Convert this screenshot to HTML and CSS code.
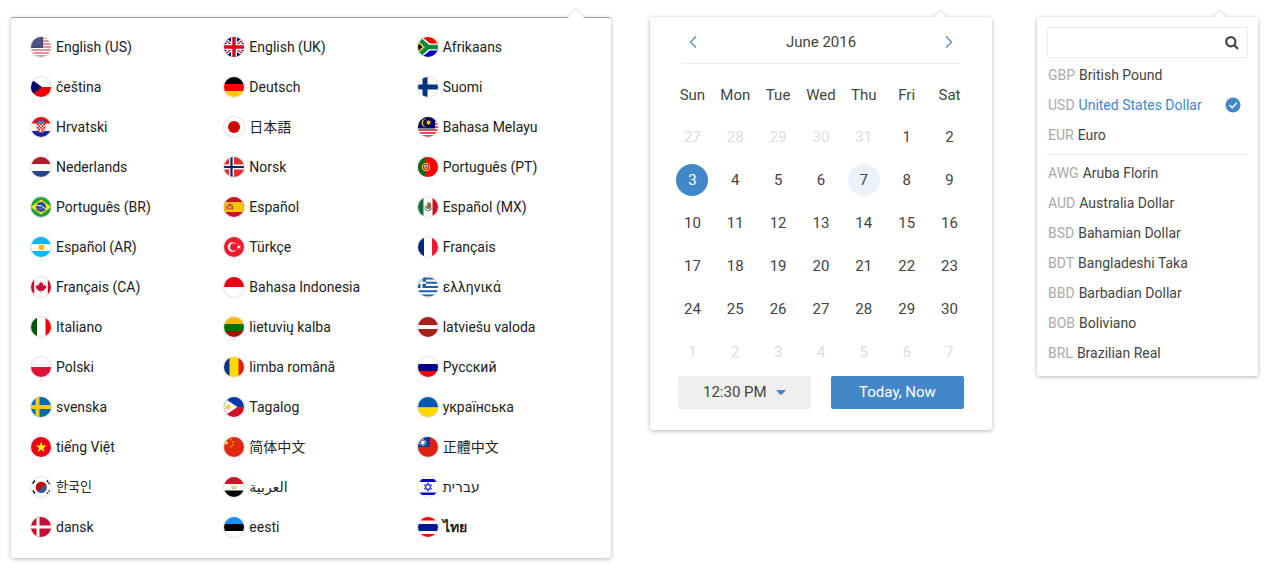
FILE: index.html
```html
<!DOCTYPE html>
<html lang="en">
<head>
<meta charset="utf-8">
<meta name="viewport" content="width=device-width, initial-scale=1">
<title>Pickers</title>
<link rel="stylesheet" href="styles.css">
</head>
<body>
<main class="pickers">

<nav class="panel languages" aria-label="Language">
<ul class="language-list">
<li><a class="language" href="#en-us"><svg class="flag" viewBox="0 0 20 20"><path fill="#fff" d="M0 0h20v20H0z"/><path stroke="#c8283c" stroke-width="1.2" d="M0 1h20M0 4h20M0 7h20M0 10h20M0 13h20M0 16h20M0 19h20"/><path fill="#3c4a78" d="M0 0h12v11H0z"/><path stroke="#8d97b5" stroke-width=".8" stroke-dasharray="1 1.4" d="M1 2h10M2 4h9M1 6h10M2 8h9"/></svg><span>English (US)</span></a></li>
<li><a class="language" href="#en-gb"><svg class="flag" viewBox="0 0 20 20"><path fill="#00007c" d="M0 0h20v20H0z"/><path stroke="#fff" stroke-width="4" d="M0 2l20 16M20 2L0 18"/><path stroke="#d8001c" stroke-width="1.2" d="M0 2l20 16M20 2L0 18"/><path stroke="#fff" stroke-width="6" d="M10 0v20M0 10h20"/><path stroke="#d8001c" stroke-width="3.4" d="M10 0v20M0 10h20"/></svg><span>English (UK)</span></a></li>
<li><a class="language" href="#af"><svg class="flag" viewBox="0 0 20 20"><path fill="#f00" d="M0 0h20v10H0z"/><path fill="#0000c4" d="M0 10h20v10H0z"/><path fill="none" stroke="#fff" stroke-width="7" d="M-2 2l10 8-10 8M8 10h13"/><path fill="#fff" d="M0 0h4l8 6.500v7L4 20H0z"/><path fill="none" stroke="#0a8a3c" stroke-width="4.400" d="M0 1l10 9L0 19M9 10h12"/><path fill="#ffc020" d="M0 4l6.500 6L0 16z"/><path d="M0 6l4.500 4L0 14z"/></svg><span>Afrikaans</span></a></li>

<li><a class="language" href="#cs"><svg class="flag" viewBox="0 0 20 20"><path fill="#fff" d="M0 0h20v10H0z"/><path fill="#f00000" d="M0 10h20v10H0z"/><path fill="#000070" d="M0 2l11 8-11 8z"/></svg><span>čeština</span></a></li>
<li><a class="language" href="#de"><svg class="flag" viewBox="0 0 20 20"><path d="M0 0h20v7H0z"/><path fill="#f00" d="M0 7h20v7H0z"/><path fill="#fc0" d="M0 14h20v6H0z"/></svg><span>Deutsch</span></a></li>
<li><a class="language" href="#fi"><svg class="flag" viewBox="0 0 20 20"><path fill="#fff" d="M0 0h20v20H0z"/><path stroke="#00357f" stroke-width="5" d="M7 0v20M0 10h20"/></svg><span>Suomi</span></a></li>

<li><a class="language" href="#hr"><svg class="flag" viewBox="0 0 20 20"><path fill="#fff" d="M0 0h20v20H0z"/><path fill="#f00" d="M0 0h20v6.5H0z"/><path fill="#1225a0" d="M0 14h20v6H0z"/><path fill="#4d7fc0" stroke="#243f8c" stroke-width=".6" d="M5.5 3.5l1.5 1 1.5-1.5L10 4l1.5-1L13 4.500l1.500-1L14 7H6z"/><path fill="#fff" stroke="#e00" stroke-width=".5" d="M6 6.500h8V12q0 3.500-4 3.500T6 12z"/><path stroke="#e00" stroke-width="1.600" stroke-dasharray="1.600 1.600" d="M6 7.500h8M7.600 9.100h6.400M6 10.700h8M7.600 12.300h6M7 14h6"/></svg><span>Hrvatski</span></a></li>
<li><a class="language" href="#ja"><svg class="flag" viewBox="0 0 20 20"><path fill="#fff" d="M0 0h20v20H0z"/><circle cx="10" cy="10" r="6" fill="#d30000"/></svg><span lang="ja">日本語</span></a></li>
<li><a class="language" href="#ms"><svg class="flag" viewBox="0 0 20 20"><path fill="#fff" d="M0 0h20v20H0z"/><path stroke="#d81424" stroke-width="1.400" d="M0 1h20M0 4h20M0 7h20M0 10h20M0 13h20M0 16h20M0 19h20"/><path fill="#000066" d="M0 0h17v11.500H0z"/><path fill="#fc0" d="M9 2a4.200 4.200 0 1 0 0 8 3.500 3.500 0 1 1 0-8zM10.500 2.500l.7 1.700 1.800-.4-1 1.600 1.200 1.400-1.900-.1-.8 1.800-.7-1.800-1.900.1 1.300-1.400-1.100-1.600 1.800.4z"/></svg><span>Bahasa Melayu</span></a></li>

<li><a class="language" href="#nl"><svg class="flag" viewBox="0 0 20 20"><path fill="#ae1c28" d="M0 0h20v7H0z"/><path fill="#fff" d="M0 7h20v7H0z"/><path fill="#21468b" d="M0 14h20v6H0z"/></svg><span>Nederlands</span></a></li>
<li><a class="language" href="#no"><svg class="flag" viewBox="0 0 20 20"><path fill="#ef2b2d" d="M0 0h20v20H0z"/><path stroke="#fff" stroke-width="5" d="M7.500 0v20M0 10h20"/><path stroke="#002868" stroke-width="2.200" d="M7.500 0v20M0 10h20"/></svg><span>Norsk</span></a></li>
<li><a class="language" href="#pt-pt"><svg class="flag" viewBox="0 0 20 20"><path fill="#f00" d="M0 0h20v20H0z"/><path fill="#066b12" d="M0 0h8v20H0z"/><circle cx="8" cy="10" r="3.700" fill="#d22" stroke="#f4d020" stroke-width="1.100"/><path fill="#fff" stroke="#d00" stroke-width=".8" d="M6 7.500h4v3q0 2-2 2t-2-2z"/><path stroke="#1c4a9c" d="M8 8.500v3M7 10h2"/></svg><span>Português (PT)</span></a></li>

<li><a class="language" href="#pt-br"><svg class="flag" viewBox="0 0 20 20"><path fill="#229e45" d="M0 0h20v20H0z"/><path fill="#f8e509" d="M10 2.500L20.500 10 10 17.500-.5 10z"/><circle cx="10" cy="10" r="5" fill="#2b49a3"/><path fill="none" stroke="#fff" stroke-width="1" d="M5.500 8.500q5-1 9 3.300"/><path stroke="#9fb0dc" stroke-width=".7" stroke-dasharray=".8 1.200" d="M7 11.500h5M8 13h4"/></svg><span>Português (BR)</span></a></li>
<li><a class="language" href="#es"><svg class="flag" viewBox="0 0 20 20"><path fill="#c8141e" d="M0 0h20v20H0z"/><path fill="#ffc400" d="M0 5h20v10H0z"/><path fill="#c8502c" d="M3.800 8h4v4.500h-4z"/><path fill="#ad1519" d="M4.700 6.800h2.200V8H4.700zM2.500 8.500h.8v4h-.8zM8.300 8.500h.8v4h-.8z"/><path stroke="#e8c9a0" stroke-width=".9" d="M5.800 8.700v3M4.500 10.200h2.700"/></svg><span>Español</span></a></li>
<li><a class="language" href="#es-mx"><svg class="flag" viewBox="0 0 20 20"><path fill="#fff" d="M0 0h20v20H0z"/><path fill="#12703a" d="M0 0h5.500v20H0z"/><path fill="#ce1126" d="M14.500 0H20v20h-5.500z"/><path fill="#8a6a48" d="M9 6q2-1.600 3.500.2 1.400 1.800.7 4.300l-2 1.500-3-.6q-1.600-1.600-.7-3.200l2 .8z"/><path fill="none" stroke="#3d9b5c" stroke-width="1" d="M6.500 10.500q1 3.400 3.500 3.400t3.800-3"/><path stroke="#c87830" stroke-width=".9" d="M8 9l2 2M10.500 12.500h2"/></svg><span>Español (MX)</span></a></li>

<li><a class="language" href="#es-ar"><svg class="flag" viewBox="0 0 20 20"><path fill="#00baff" d="M0 0h20v20H0z"/><path fill="#fff" d="M0 7h20v7H0z"/><circle cx="10.300" cy="10.300" r="3" fill="#fdc52c"/><circle cx="10.300" cy="10.300" r="3.500" fill="none" stroke="#f6cf68" stroke-dasharray=".8 .8"/><path stroke="#c98f18" stroke-width=".7" d="M9 9.800h1M10.800 9.800h1M9.600 11.500h1.500"/></svg><span>Español (AR)</span></a></li>
<li><a class="language" href="#tr"><svg class="flag" viewBox="0 0 20 20"><path fill="#f31830" d="M0 0h20v20H0z"/><circle cx="8.500" cy="10" r="4.800" fill="#fff"/><circle cx="9.900" cy="10" r="3.800" fill="#f31830"/><path fill="#fff" d="M12.300 10l1.700-.5.100-1.800 1.100 1.400 1.700-.5-1 1.400 1 1.400-1.700-.5-1.100 1.400-.1-1.800z"/></svg><span>Türkçe</span></a></li>
<li><a class="language" href="#fr"><svg class="flag" viewBox="0 0 20 20"><path fill="#fff" d="M0 0h20v20H0z"/><path fill="#00267f" d="M0 0h6v20H0z"/><path fill="#f31830" d="M14 0h6v20h-6z"/></svg><span>Français</span></a></li>

<li><a class="language" href="#fr-ca"><svg class="flag" viewBox="0 0 20 20"><path fill="#fff" d="M0 0h20v20H0z"/><path fill="#c60c30" d="M0 0h3.200v20H0zM16.800 0H20v20h-3.200zM10 4.500l1.200 2 1.200-.5-.4 3 1.500-1.200.5 1 1.500-.2-.6 1.600.7.500-3 2.400.3.900-2.600-.3v2h-.6v-2l-2.600.3.300-.9-3-2.400.7-.5-.6-1.600 1.500.2.500-1L8 9l-.4-3 1.200.5z"/></svg><span>Français (CA)</span></a></li>
<li><a class="language" href="#id"><svg class="flag" viewBox="0 0 20 20"><path fill="#fff" d="M0 0h20v20H0z"/><path fill="#e70011" d="M0 0h20v10H0z"/></svg><span>Bahasa Indonesia</span></a></li>
<li><a class="language" href="#el"><svg class="flag" viewBox="0 0 20 20"><path fill="#fff" d="M0 0h20v20H0z"/><path stroke="#1c5fb0" stroke-width="2.100" d="M0 1.500h20M0 5.700h20M0 10h20M0 14.200h20M0 18.500h20"/><path fill="#1c5fb0" d="M0 0h8v11H0z"/><path stroke="#fff" stroke-width="2" d="M3.500 0v11M0 5.700h8"/></svg><span>ελληνικά</span></a></li>

<li><a class="language" href="#it"><svg class="flag" viewBox="0 0 20 20"><path fill="#fff" d="M0 0h20v20H0z"/><path fill="#005700" d="M0 0h6v20H0z"/><path fill="#fc0000" d="M14.500 0H20v20h-5.500z"/></svg><span>Italiano</span></a></li>
<li><a class="language" href="#lt"><svg class="flag" viewBox="0 0 20 20"><path fill="#ffb800" d="M0 0h20v7H0z"/><path fill="#007308" d="M0 7h20v7H0z"/><path fill="#bf0000" d="M0 14h20v6H0z"/></svg><span>lietuvių kalba</span></a></li>
<li><a class="language" href="#lv"><svg class="flag" viewBox="0 0 20 20"><path fill="#a8201c" d="M0 0h20v20H0z"/><path fill="#fff" d="M0 8h20v4H0z"/></svg><span>latviešu valoda</span></a></li>

<li><a class="language" href="#pl"><svg class="flag" viewBox="0 0 20 20"><path fill="#fff" d="M0 0h20v10H0z"/><path fill="#dc143c" d="M0 10h20v10H0z"/></svg><span>Polski</span></a></li>
<li><a class="language" href="#ro"><svg class="flag" viewBox="0 0 20 20"><path fill="#ffd900" d="M0 0h20v20H0z"/><path fill="#00319c" d="M0 0h5.500v20H0z"/><path fill="#de2110" d="M14.500 0H20v20h-5.500z"/></svg><span>limba română</span></a></li>
<li><a class="language" href="#ru"><svg class="flag" viewBox="0 0 20 20"><path fill="#fff" d="M0 0h20v7H0z"/><path fill="#00008c" d="M0 7h20v7H0z"/><path fill="#f00" d="M0 14h20v6H0z"/></svg><span>Русский</span></a></li>

<li><a class="language" href="#sv"><svg class="flag" viewBox="0 0 20 20"><path fill="#066aa7" d="M0 0h20v20H0z"/><path stroke="#fecc00" stroke-width="4" d="M6.500 0v20M0 10h20"/></svg><span>svenska</span></a></li>
<li><a class="language" href="#tl"><svg class="flag" viewBox="0 0 20 20"><path fill="#0038a8" d="M0 0h20v10H0z"/><path fill="#ce1126" d="M0 10h20v10H0z"/><path fill="#fff" d="M0 1l13.500 9L0 19z"/><circle cx="4" cy="10" r="2" fill="#fcc819"/><circle cx="4" cy="10" r="2.700" fill="none" stroke="#fcc819" stroke-width="1.200" stroke-dasharray=".8 1.320"/><path fill="#fcc819" d="M10.500 9l1.500 1-1.500 1zM1 4.500l1.500.7L1 6zM1 14l1.500.8L1 15.500z"/></svg><span>Tagalog</span></a></li>
<li><a class="language" href="#uk"><svg class="flag" viewBox="0 0 20 20"><path fill="#0058b5" d="M0 0h20v10.500H0z"/><path fill="#ffd600" d="M0 10.500h20V20H0z"/></svg><span>українська</span></a></li>

<li><a class="language" href="#vi"><svg class="flag" viewBox="0 0 20 20"><path fill="#ec0015" d="M0 0h20v20H0z"/><path fill="#ff0" d="M10.200 4.500l1.300 4h4.100l-3.300 2.400 1.300 4-3.400-2.500-3.400 2.500 1.300-4-3.300-2.400h4.100z"/></svg><span>tiếng Việt</span></a></li>
<li><a class="language" href="#zh-hans"><svg class="flag" viewBox="0 0 20 20"><path fill="#de2910" d="M0 0h20v20H0z"/><path fill="#ffde00" d="M2.500 3.500l.6 1.600h1.700L3.500 6.200l.5 1.700-1.500-1-1.500 1 .5-1.700L.2 5.100h1.700zM6.300 2h1.300v1.200H6.300zM8.500 4.300h1.300v1.200H8.500zM8.500 7.300h1.300v1.200H8.500zM6.300 9h1.300v1.200H6.300z"/></svg><span lang="zh-Hans">简体中文</span></a></li>
<li><a class="language" href="#zh-hant"><svg class="flag" viewBox="0 0 20 20"><path fill="#de2110" d="M0 0h20v20H0z"/><path fill="#08399c" d="M0 0h12v10H0z"/><circle cx="4.800" cy="5.500" r="1.900" fill="#fff"/><circle cx="4.800" cy="5.500" r="2.900" fill="none" stroke="#fff" stroke-width="1.200" stroke-dasharray=".7 .82"/></svg><span lang="zh-Hant">正體中文</span></a></li>

<li><a class="language" href="#ko"><svg class="flag" viewBox="0 0 20 20"><path fill="#fff" d="M0 0h20v20H0z"/><circle cx="10.300" cy="10.500" r="5.500" fill="#3d5897"/><path fill="#c70000" d="M5.200 12.500A5.500 5.500 0 1 1 15.500 8.700Q14 7.500 12.300 8.500T9.500 12.300 5.200 12.500z"/><path stroke="#000" stroke-width="1.400" d="M1.500 6.500l2.500-3M16 3.500L17 5M17.600 5.700l.9 1.300M16.200 16.500l.9-1.200M17.700 14.500l.9-1.200M1.800 13.500l2.200 3"/></svg><span lang="ko">한국인</span></a></li>
<li><a class="language" href="#ar"><svg class="flag" viewBox="0 0 20 20"><path fill="#fff" d="M0 0h20v20H0z"/><path fill="#ce1126" d="M0 0h20v7H0z"/><path d="M0 13.500h20V20H0z"/><path fill="none" stroke="#d6ab38" stroke-width="1" d="M8 8.500v2.500l1.200 1M12 8.500v2.500l-1.200 1M10 8.500V12"/></svg><span lang="ar">العربية</span></a></li>
<li><a class="language" href="#he"><svg class="flag" viewBox="0 0 20 20"><path fill="#fff" d="M0 0h20v20H0z"/><path fill="#0000c8" d="M0 2h20v3H0zM0 15.500h20v2.500H0z"/><path fill="none" stroke="#2020d8" stroke-width=".9" d="M10 5.800l3.600 6.300H6.400zM10 14.200l3.600-6.300H6.400z"/></svg><span lang="he">עברית</span></a></li>

<li><a class="language" href="#da"><svg class="flag" viewBox="0 0 20 20"><path fill="#c60c30" d="M0 0h20v20H0z"/><path stroke="#fff" stroke-width="3" d="M7 0v20M0 10h20"/></svg><span>dansk</span></a></li>
<li><a class="language" href="#et"><svg class="flag" viewBox="0 0 20 20"><path fill="#fff" d="M0 0h20v20H0z"/><path fill="#1791ff" d="M0 0h20v7H0z"/><path d="M0 7h20v7H0z"/></svg><span>eesti</span></a></li>
<li><a class="language" href="#th"><svg class="flag" viewBox="0 0 20 20"><path fill="#fff" d="M0 0h20v20H0z"/><path fill="#f00" d="M0 0h20v3.500H0zM0 17h20v3H0z"/><path fill="#0a1490" d="M0 7h20v7H0z"/></svg><span lang="th">ไทย</span></a></li>
</ul>
</nav>

<section class="panel calendar" aria-label="Date and time">
<header class="calendar-head">
<button class="step" type="button" aria-label="Previous month"><svg viewBox="0 0 8 12"><path d="M7 .5L1.500 6 7 11.500"/></svg></button>
<h2 class="month">June 2016</h2>
<button class="step" type="button" aria-label="Next month"><svg viewBox="0 0 8 12"><path d="M1 .5L6.500 6 1 11.500"/></svg></button>
</header>
<table class="days">
<thead><tr><th>Sun</th><th>Mon</th><th>Tue</th><th>Wed</th><th>Thu</th><th>Fri</th><th>Sat</th></tr></thead>
<tbody>
<tr><td><button class="day other">27</button></td><td><button class="day other">28</button></td><td><button class="day other">29</button></td><td><button class="day other">30</button></td><td><button class="day other">31</button></td><td><button class="day">1</button></td><td><button class="day">2</button></td></tr>
<tr><td><button class="day selected">3</button></td><td><button class="day">4</button></td><td><button class="day">5</button></td><td><button class="day">6</button></td><td><button class="day today">7</button></td><td><button class="day">8</button></td><td><button class="day">9</button></td></tr>
<tr><td><button class="day">10</button></td><td><button class="day">11</button></td><td><button class="day">12</button></td><td><button class="day">13</button></td><td><button class="day">14</button></td><td><button class="day">15</button></td><td><button class="day">16</button></td></tr>
<tr><td><button class="day">17</button></td><td><button class="day">18</button></td><td><button class="day">19</button></td><td><button class="day">20</button></td><td><button class="day">21</button></td><td><button class="day">22</button></td><td><button class="day">23</button></td></tr>
<tr><td><button class="day">24</button></td><td><button class="day">25</button></td><td><button class="day">26</button></td><td><button class="day">27</button></td><td><button class="day">28</button></td><td><button class="day">29</button></td><td><button class="day">30</button></td></tr>
<tr><td><button class="day other">1</button></td><td><button class="day other">2</button></td><td><button class="day other">3</button></td><td><button class="day other">4</button></td><td><button class="day other">5</button></td><td><button class="day other">6</button></td><td><button class="day other">7</button></td></tr>
</tbody>
</table>
<footer class="calendar-foot">
<div class="time">
<select class="time-select" aria-label="Time"><option>12:30 PM</option></select>
<svg class="caret" viewBox="0 0 10 5"><path d="M0 0h10L6 4.500H4z"/></svg>
</div>
<button class="now" type="button">Today, Now</button>
</footer>
</section>

<section class="panel currencies" aria-label="Currency">
<div class="search">
<input class="search-input" type="text" aria-label="Search currencies">
<button class="search-button" type="button" aria-label="Search"><svg viewBox="0 0 14 14"><circle cx="5.800" cy="5.800" r="4.600"/><path d="M9.300 9.300l3.700 3.700"/></svg></button>
</div>
<ul class="currency-list">
<li><button class="currency"><span class="code">GBP</span> British Pound</button></li>
<li><button class="currency chosen"><span class="code">USD</span> United States Dollar<svg class="tick" viewBox="0 0 16 16"><circle cx="8" cy="8" r="7.500"/><path d="M4.500 8l2.700 2.700 4.600-5"/></svg></button></li>
<li><button class="currency"><span class="code">EUR</span> Euro</button></li>
</ul>
<ul class="currency-list rest">
<li><button class="currency"><span class="code">AWG</span> Aruba Florin</button></li>
<li><button class="currency"><span class="code">AUD</span> Australia Dollar</button></li>
<li><button class="currency"><span class="code">BSD</span> Bahamian Dollar</button></li>
<li><button class="currency"><span class="code">BDT</span> Bangladeshi Taka</button></li>
<li><button class="currency"><span class="code">BBD</span> Barbadian Dollar</button></li>
<li><button class="currency"><span class="code">BOB</span> Boliviano</button></li>
<li><button class="currency"><span class="code">BRL</span> Brazilian Real</button></li>
</ul>
</section>

</main>
</body>
</html>
```
FILE: styles.css
```css
* {
  box-sizing: border-box;
}

body {
  margin: 0;
  background: #fff;
  color: #444;
  font-family: Roboto, "Noto Sans", "Noto Sans CJK SC", "DejaVu Sans", sans-serif;
  font-size: 14px;
}

button,
input,
select {
  margin: 0;
  padding: 0;
  border: 0;
  background: none;
  color: inherit;
  font: inherit;
}

button {
  cursor: pointer;
}

ul {
  margin: 0;
  padding: 0;
  list-style: none;
}

.pickers {
  display: grid;
  grid-template-columns: 600fr 342fr 227fr;
  align-items: start;
  gap: 39px;
  padding: 17px 10px 8px 11px;
}

.panel {
  position: relative;
  min-width: 0;
  border-radius: 3px;
  background: #fff;
  box-shadow: 0 1px 4px rgba(0, 0, 0, 0.3);
}

.panel::before {
  content: "";
  position: absolute;
  top: -4px;
  width: 9px;
  height: 9px;
  background: #fff;
  box-shadow: -1px -1px 2px rgba(0, 0, 0, 0.13);
  transform: rotate(45deg);
}

/* Languages */

.languages {
  padding: 9px 0 11px 20px;
  border-top: 1px solid #a3a3a3;
}

.languages::before {
  top: -6px;
  right: 29px;
  width: 12px;
  height: 12px;
}

.language-list {
  display: grid;
  grid-template-columns: repeat(3, 1fr);
}

.language {
  display: flex;
  align-items: center;
  gap: 5px;
  height: 40px;
  color: #212121;
  line-height: 20px;
  text-decoration: none;
  white-space: nowrap;
}

.language [lang="ja"] {
  font-family: Roboto, "Noto Sans CJK JP", sans-serif;
}

.language [lang="zh-Hans"] {
  font-family: Roboto, "Noto Sans CJK SC", sans-serif;
}

.language [lang="zh-Hant"] {
  font-family: Roboto, "Noto Sans CJK TC", sans-serif;
}

.language [lang="ko"] {
  font-family: Roboto, "Noto Sans CJK KR", sans-serif;
  font-size: 13px;
}

.language [lang="th"] {
  font-weight: 600;
}

.flag {
  flex: none;
  width: 20px;
  height: 20px;
  border-radius: 50%;
  box-shadow: 0 0 2px rgba(0, 0, 0, 0.4);
}

/* Calendar */

.calendar {
  padding: 0 21px 21px;
  font-size: 15px;
}

.calendar::before {
  right: 47px;
}

.calendar-head {
  display: flex;
  align-items: center;
  justify-content: space-between;
  height: 47px;
  margin: 0 11px;
  padding-top: 3px;
  border-bottom: 1px solid #eee;
}

.month {
  margin: 0;
  font-size: 15px;
  font-weight: 400;
}

.step {
  display: flex;
  align-items: center;
  justify-content: center;
  width: 22px;
  height: 22px;
}

.step svg {
  width: 8px;
  height: 12px;
  fill: none;
  stroke: #4288c9;
  stroke-width: 1.200;
}

.days {
  width: 100%;
  height: 299px;
  margin-top: 10px;
  border-collapse: collapse;
  table-layout: fixed;
}

.days th,
.days td {
  height: 42px;
  padding: 0;
  font-weight: 400;
  text-align: center;
  vertical-align: middle;
}

.day {
  display: block;
  width: 32px;
  height: 32px;
  margin: 0 auto;
  border-radius: 50%;
}

.day.other {
  color: #ddd;
}

.day.selected {
  background: #4288c9;
  color: #fff;
}

.day.today {
  background: #ebf2fb;
}

.calendar-foot {
  display: grid;
  grid-template-columns: 1fr 1fr;
  gap: 20px;
  margin: 3px 7px 0;
}

.time {
  position: relative;
}

.time-select {
  width: 100%;
  height: 33px;
  padding: 0 0 2px 25px;
  border-radius: 2px;
  background: #efefef;
  appearance: none;
}

.caret {
  position: absolute;
  top: 14px;
  right: 25px;
  width: 10px;
  height: 5px;
  fill: #4288c9;
  pointer-events: none;
}

.now {
  height: 33px;
  padding-bottom: 2px;
  border-radius: 2px;
  background: #4288c9;
  color: #fff;
}

/* Currencies */

.currencies {
  margin-left: 6px;
  padding: 10px 10px 8px;
}

.currencies::before {
  right: 34px;
}

.search {
  display: flex;
  height: 31px;
  margin-bottom: 2px;
  border: 1px solid #eee;
}

.search-input {
  flex: 1;
  min-width: 0;
  padding: 0 8px;
}

.search-button {
  display: flex;
  align-items: center;
  justify-content: center;
  width: 30px;
}

.search-button svg {
  width: 14px;
  height: 14px;
  fill: none;
  stroke: #444;
  stroke-width: 2.200;
}

.currency-list.rest {
  margin-top: 4px;
  padding-top: 3px;
  border-top: 1px solid #eee;
}

.currency {
  display: flex;
  align-items: center;
  gap: 4px;
  width: 100%;
  height: 30px;
  padding: 0 7px 0 1px;
  text-align: left;
  white-space: nowrap;
}

.code {
  color: #aaa;
}

.chosen {
  color: #4288c9;
}

.tick {
  width: 16px;
  height: 16px;
  margin-left: auto;
  fill: #4288c9;
}

.tick path {
  fill: none;
  stroke: #fff;
  stroke-width: 1.400;
}
```
